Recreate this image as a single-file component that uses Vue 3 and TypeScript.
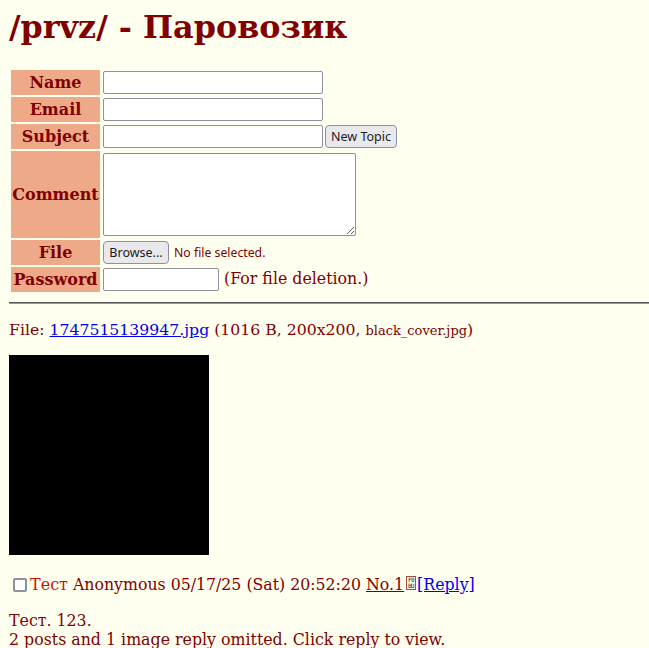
<script setup lang="ts">
const rows = ['Name', 'Email']
</script>

<template>
  <div class="page">
    <h1 class="title">/prvz/ - Паровозик</h1>

    <form class="post-form" @submit.prevent>
      <table class="form-table">
        <tbody>
          <tr v-for="row in rows" :key="row">
            <th>{{ row }}</th>
            <td><input class="field" type="text" /></td>
          </tr>
          <tr>
            <th>Subject</th>
            <td>
              <input class="field" type="text" />
              <button class="btn submit" type="submit">New Topic</button>
            </td>
          </tr>
          <tr>
            <th>Comment</th>
            <td><textarea class="comment"></textarea></td>
          </tr>
          <tr>
            <th>File</th>
            <td>
              <button class="btn browse" type="button">Browse...</button>
              <span class="no-file">No file selected.</span>
            </td>
          </tr>
          <tr>
            <th>Password</th>
            <td>
              <input class="field password" type="password" />
              <span class="hint">(For file deletion.)</span>
            </td>
          </tr>
        </tbody>
      </table>
    </form>

    <hr class="divider" />

    <div class="file-info">
      File: <a href="#">1747515139947.jpg</a> (1016 B, 200x200, <small>black_cover.jpg</small>)
    </div>
    <div class="thumb"></div>

    <div class="post-head">
      <input class="check" type="checkbox" />
      <span class="subject">Тест</span>
      <span class="meta"> Anonymous 05/17/25 (Sat) 20:52:20 </span>
      <a class="no" href="#">No.1</a>
      <span class="tofu"><span>F0</span><span>BD</span></span>
      <a href="#">[Reply]</a>
    </div>

    <div class="post-body">Тест. 123.</div>
    <div class="omitted">2 posts and 1 image reply omitted. Click reply to view.</div>
  </div>
</template>

<style>
html,
body {
  margin: 0;
  height: 648px;
  overflow: hidden;
  background: #fffff0;
}
</style>

<style scoped>
.page {
  padding-left: 9px;
  color: #800000;
  font-family: "DejaVu Serif", serif;
  font-size: 15.8px;
}

.title {
  margin: 0;
  padding-top: 8px;
  height: 70px;
  box-sizing: border-box;
  font-size: 31.8px;
  line-height: 38px;
  font-weight: 700;
}

.post-form {
  margin: 0;
}

.form-table {
  border-collapse: separate;
  border-spacing: 2px;
  margin-top: -2px;
  margin-left: 0;
}

.form-table th {
  width: 89px;
  padding: 0;
  height: 25px;
  box-sizing: border-box;
  background: #eeaa88;
  font-size: 16px;
  font-weight: 700;
  text-align: center;
  white-space: nowrap;
}

.form-table td {
  padding: 1px 0 1px 1px;
  white-space: nowrap;
  line-height: 0;
}

.field {
  box-sizing: border-box;
  width: 220px;
  height: 23px;
  padding: 0 4px;
  margin: 0;
  background: #fff;
  border: 1px solid #8f8f9d;
  border-radius: 2px;
  vertical-align: middle;
}

.password {
  width: 116px;
}

.comment {
  display: block;
  box-sizing: border-box;
  width: 253px;
  height: 83px;
  margin: 1px 0;
  background: #fff;
  border: 1px solid #8f8f9d;
  border-radius: 2px;
}

.btn {
  box-sizing: border-box;
  height: 23px;
  margin: 0;
  padding: 0;
  background: #e9e9ed;
  border: 1px solid #8f8f9d;
  border-radius: 4px;
  color: #1a1a1a;
  font-family: "Noto Sans", sans-serif;
  font-size: 12.5px;
  line-height: 21px;
  vertical-align: middle;
}

.submit {
  width: 72px;
  margin-left: 2px;
}

.browse {
  width: 66px;
}

.no-file {
  margin-left: 5px;
  font-family: "Noto Sans", sans-serif;
  font-size: 12.25px;
  line-height: 23px;
  vertical-align: middle;
}

.hint {
  display: inline-block;
  margin: 0 0 2px 5px;
  line-height: 19px;
  vertical-align: middle;
}

.divider {
  box-sizing: border-box;
  width: 640px;
  height: 2px;
  margin: 8px 0 0;
  border: 0;
  border-top: 1px solid #555;
  border-bottom: 1px solid #999;
}

.file-info {
  margin-top: 16px;
  font-size: 15.7px;
  line-height: 19px;
  white-space: nowrap;
}

.file-info small {
  font-size: 13px;
}

a {
  color: #0000ee;
}

.thumb {
  width: 200px;
  height: 200px;
  margin-top: 15px;
  background: #000;
}

.post-head {
  display: flex;
  align-items: center;
  margin-top: 20px;
  height: 19px;
  white-space: pre;
}

.check {
  box-sizing: border-box;
  appearance: none;
  width: 14px;
  height: 14px;
  margin: 1px 3px 0 4px;
  background: #fff;
  border: 2px solid #8f8f9d;
  border-radius: 2px;
}

.subject {
  color: #cc1105;
  font-size: 16px;
}

.meta {
  font-size: 15.75px;
}

a.no {
  color: #800000;
}

.tofu {
  display: inline-flex;
  flex-direction: column;
  align-items: center;
  justify-content: center;
  box-sizing: border-box;
  width: 10px;
  height: 14px;
  margin: 0 1px 4px 2px;
  border: 1px solid #a05040;
  color: #222;
  font-family: "DejaVu Sans Mono", monospace;
  font-size: 6px;
  line-height: 6px;
  letter-spacing: -0.5px;
}

.post-body {
  margin-top: 17px;
  line-height: 19px;
}

.omitted {
  line-height: 19px;
  white-space: nowrap;
}
</style>
